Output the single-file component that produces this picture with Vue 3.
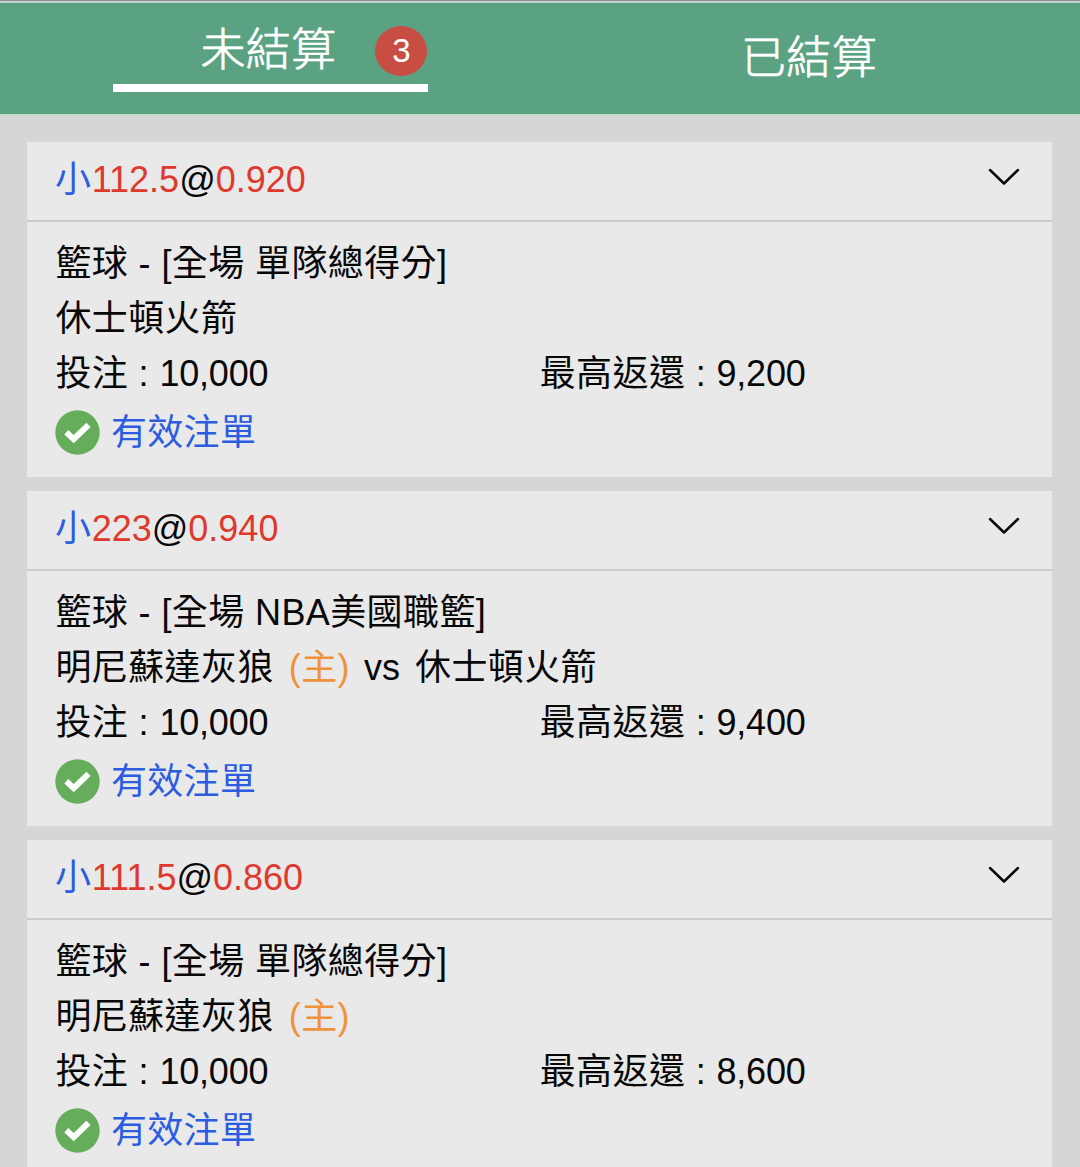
<script setup>
const bets = [
  { line: '112.5', odds: '0.920', type: '[全場 單隊總得分]', home: '', away: '休士頓火箭', win: '9,200' },
  { line: '223', odds: '0.940', type: '[全場 NBA美國職籃]', home: '明尼蘇達灰狼', away: '休士頓火箭', win: '9,400' },
  { line: '111.5', odds: '0.860', type: '[全場 單隊總得分]', home: '明尼蘇達灰狼', away: '', win: '8,600' },
]
</script>

<template>
  <div class="page">
    <header class="tabs">
      <div class="tab active">
        <div class="tab-inner"><span class="label">未結算</span><span class="count">3</span></div>
      </div>
      <div class="tab"><span class="label">已結算</span></div>
    </header>
    <main class="list">
      <section v-for="bet in bets" :key="bet.line" class="card">
        <div class="head">
          <div class="pick"><span class="blue side">小</span><span class="red">{{ bet.line }}</span><span class="at">@</span><span class="red">{{ bet.odds }}</span></div>
          <svg class="chevron" width="32" height="18" viewBox="0 0 32 18"><path d="M2 2 L16 15.5 L30 2" fill="none" stroke="#080808" stroke-width="2.5" stroke-linecap="round" stroke-linejoin="round" /></svg>
        </div>
        <div class="body">
          <div class="row">籃球 - {{ bet.type }}</div>
          <div class="row"><template v-if="bet.home">{{ bet.home }}<span class="orange">(主)</span></template><span v-if="bet.home && bet.away" class="vs">vs</span>{{ bet.away }}</div>
          <div class="row money">
            <div class="cell"><span>投注 : </span><span class="num">10,000</span></div>
            <div class="cell"><span>最高返還 : </span><span class="num">{{ bet.win }}</span></div>
          </div>
          <div class="status">
            <svg width="45" height="45" viewBox="0 0 45 45"><circle cx="22.5" cy="22.5" r="22.2" fill="#65ad5b" /><path d="M11.3 22.3 L18.7 29.2 L33.5 14.8" fill="none" stroke="#fff" stroke-width="6" /></svg>
            <span class="blue">有效注單</span>
          </div>
        </div>
      </section>
    </main>
  </div>
</template>

<style>
body { margin: 0; background: #d6d6d6; overflow: hidden; }
</style>
<style scoped>
.page { height: 1167px; overflow: hidden; background: #d6d6d6; color: #080808; font-family: "Liberation Sans", "Noto Sans CJK TC", sans-serif; font-size: 36px; }
.tabs { box-sizing: border-box; height: 116px; border-top: 1px solid #8b928f; border-bottom: 2px solid #c8ddd1; box-shadow: inset 0 2px #bdd3c8; background: #5ba283; color: #fff; display: flex; }
.tab { width: 540px; display: flex; justify-content: center; align-items: flex-start; }
.label { font-size: 45px; line-height: 66px; font-weight: 300; -webkit-text-stroke: 0.7px #fff; white-space: nowrap; letter-spacing: 0.3px; }
.tab:not(.active) .label { margin: 25px 2px 0 0; }
.tab-inner { box-sizing: border-box; width: 315px; height: 91px; border-bottom: 8px solid #fff; padding-left: 88px; display: flex; }
.active .label { margin-top: 17px; }
.count { width: 52px; height: 50px; margin: 25px 0 0 39px; border-radius: 50%; background: #c84d43; text-align: center; font-size: 33px; line-height: 50px; }
.list { padding: 26px 28px 0 27px; display: flex; flex-direction: column; gap: 14px; }
.card { height: 335px; background: #e9e9e9; }
.head { box-sizing: border-box; height: 80px; border-bottom: 2px solid #cbcbcb; padding: 0 32px 0 28px; display: flex; justify-content: space-between; }
.pick { line-height: 76px; white-space: nowrap; }
.side { letter-spacing: 0.7px; }
.at { color: #080808; }
.chevron { margin-top: 26px; }
.body { padding: 14px 28px 0; }
.row { height: 55px; line-height: 55px; white-space: pre; letter-spacing: 0.4px; padding-left: 0.4px; }
.money { display: flex; }
.cell { width: 485px; white-space: pre; }
.num { letter-spacing: -0.2px; }
.orange { color: #ee923c; margin-left: 15px; }
.vs { margin: 0 15px 0 14px; letter-spacing: 0; }
.status { display: flex; align-items: center; gap: 11px; height: 62px; line-height: 62px; letter-spacing: 0.3px; }
.status .blue { margin-top: 1px; }
.blue { color: #2c5ce0; }
.red { color: #df392e; }
</style>
